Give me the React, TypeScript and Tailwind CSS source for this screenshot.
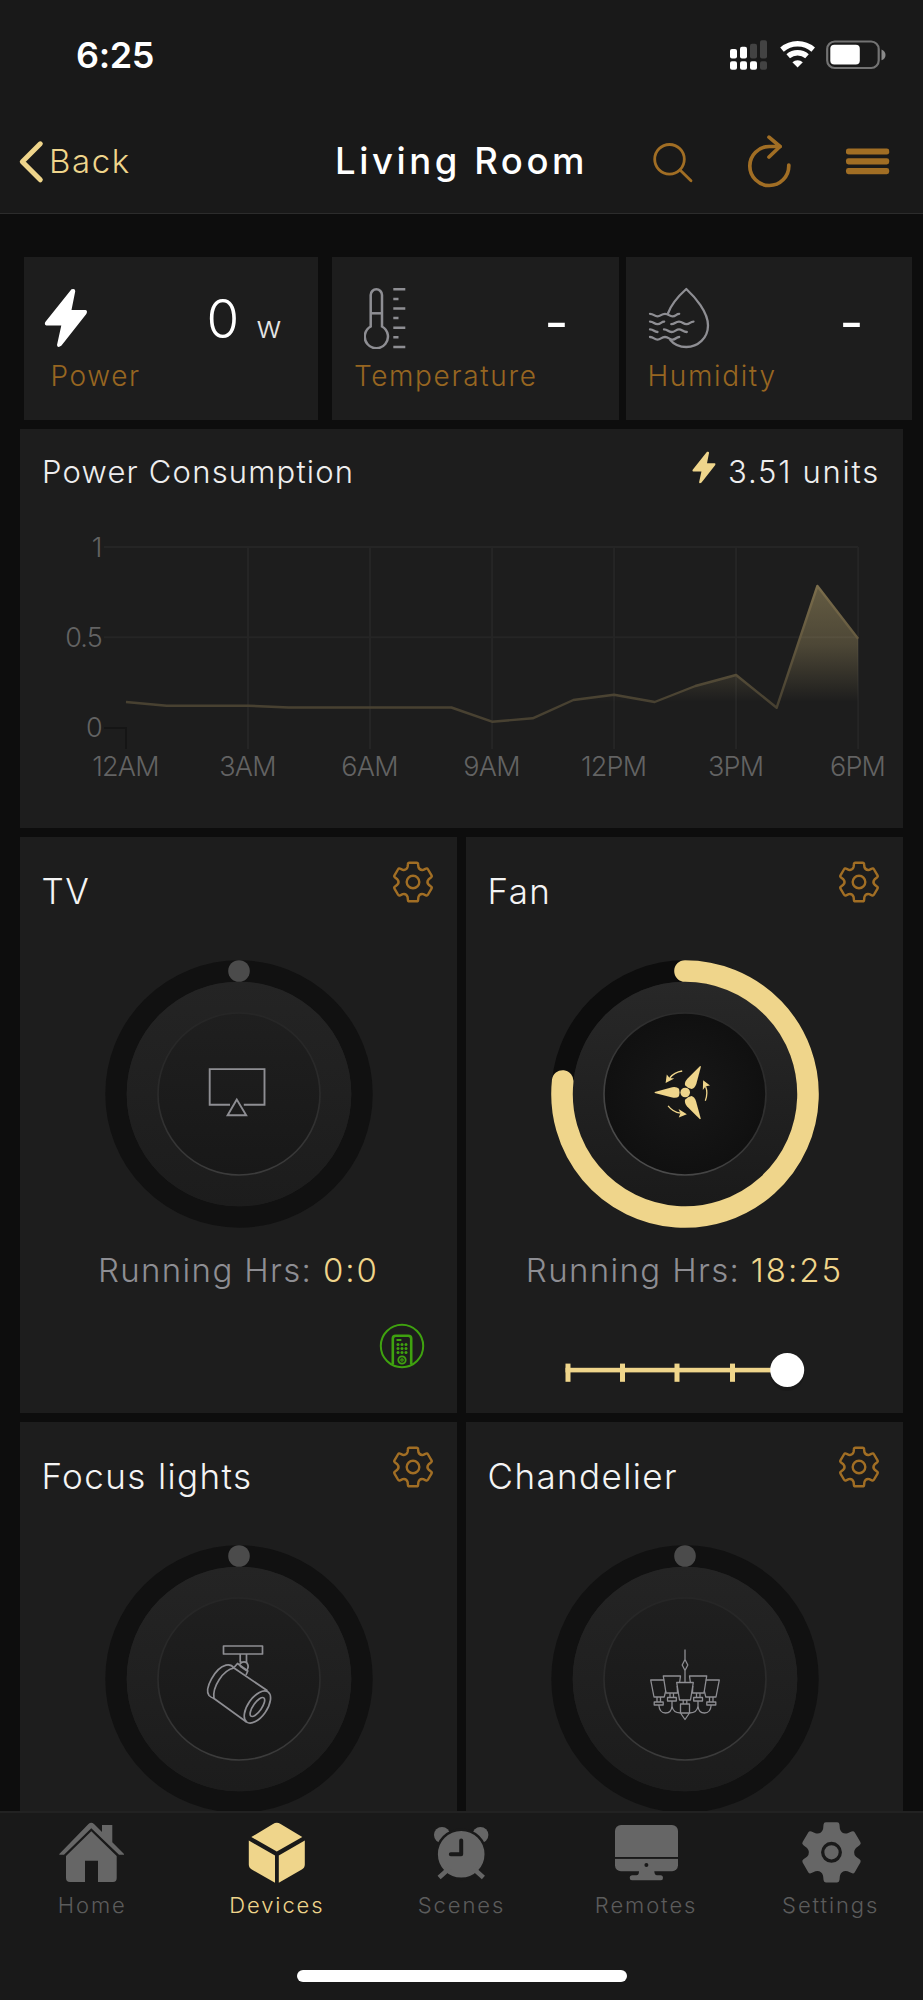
import type { ReactNode } from 'react';
import { clsx } from 'clsx';

const GOLD = '#efd58b';
const BRONZE = '#a16e24';
const GREY = '#8e8e93';

// Six-tooth gear outline centred on 0,0 with an outer radius of 19.5
const gearPath = (() => {
  const rotate = (x: number, y: number, deg: number) => {
    const a = (deg * Math.PI) / 180;
    return `${(x * Math.cos(a) - y * Math.sin(a)).toFixed(2)} ${(x * Math.sin(a) + y * Math.cos(a)).toFixed(2)}`;
  };
  let d = '';
  for (let i = 0; i < 6; i++) {
    const p = (x: number, y: number) => rotate(x, y, i * 60);
    d += `${i === 0 ? 'M' : 'L'}${p(-5.4, -15)} L${p(-5.1, -17.8)} Q${p(-5, -19.3)} ${p(-3.6, -19.3)}`;
    d += `L${p(3.6, -19.3)} Q${p(5, -19.3)} ${p(5.1, -17.8)} L${p(5.4, -15)} Q${p(6.6, -11.4)} ${rotate(-5.4, -15, i * 60 + 60)}`;
  }
  return d + 'Z';
})();

function StatusBar() {
  return (
    <div className="flex h-[110px] items-center justify-between pl-[76px] pr-[36px]">
      <span className="text-[36px] font-semibold leading-none tracking-[-0.4px] text-white">6:25</span>
      <div className="flex items-center">
        <svg width="38" height="30" viewBox="0 0 38 30" fill="#fff">
          <rect x="0" y="9" width="7" height="9.5" rx="2" />
          <rect x="10" y="6.7" width="7" height="11.8" rx="2" />
          <rect x="20" y="3.7" width="7" height="14.8" rx="2" fill="#434343" />
          <rect x="30" y="0.3" width="7" height="18.2" rx="2" fill="#434343" />
          <rect x="0" y="21.3" width="7" height="8.5" rx="2" />
          <rect x="10" y="21.3" width="7" height="8.5" rx="2" />
          <rect x="20" y="21.3" width="7" height="8.5" rx="2" />
          <rect x="30" y="21.3" width="7" height="8.5" rx="2" fill="#434343" />
        </svg>
        <svg width="36" height="30" viewBox="0 0 36 30" className="ml-[12px] mr-[10px]" fill="none" stroke="#fff">
          <path d="M2 9.6 A23.7 23.7 0 0 1 33.2 9.6" strokeWidth="5.4" />
          <path d="M8.2 16.2 A14.4 14.4 0 0 1 27 16.2" strokeWidth="5.4" />
          <path d="M17.6 27.5 L12.4 22.2 A8 8 0 0 1 22.8 22.2 Z" fill="#fff" stroke="none" />
        </svg>
        <svg width="61" height="30" viewBox="0 0 61 30">
          <rect x="1.2" y="1.5" width="51.5" height="26.5" rx="7.5" fill="none" stroke="#737373" strokeWidth="2.2" />
          <rect x="4.3" y="4.7" width="29.5" height="19.8" rx="4" fill="#fff" />
          <path d="M55.5 9.5 Q59.5 11 59.5 15 Q59.5 19 55.5 20.3 Z" fill="#8a8a8a" />
        </svg>
      </div>
    </div>
  );
}

function NavBar() {
  return (
    <div className="grid h-[103px] grid-cols-[336px_1fr_auto] items-center pr-[32px]">
      <button className="flex items-center gap-[5px] pl-[18px] text-[33px] font-light leading-none tracking-[1.6px] text-[#efd58b]">
        <svg width="26" height="44" viewBox="0 0 26 44" fill="none" stroke={GOLD} strokeWidth="5" strokeLinecap="round" strokeLinejoin="round">
          <path d="M22.3 3.8 L4.3 21.8 L22.3 39.8" />
        </svg>
        Back
      </button>
      <h1 className="-ml-[1px] whitespace-nowrap text-[36.5px] font-medium leading-none tracking-[3.55px] text-white">Living Room</h1>
      <div className="flex items-center gap-[52px]" style={{ color: BRONZE }}>
        <svg width="42" height="52" viewBox="0 0 42 52" fill="none" stroke="currentColor" strokeWidth="2.8" strokeLinecap="round">
          <circle cx="16.5" cy="23.3" r="14.8" />
          <path d="M27.3 34.3 L38 44.7" />
        </svg>
        <svg width="46" height="54" viewBox="0 0 46 54" fill="none" stroke="currentColor" strokeWidth="3.7" strokeLinecap="round" strokeLinejoin="round">
          <path d="M41.8 30 V31 A19.5 19.5 0 1 1 22.3 11.5 H33" />
          <path d="M22 2.1 L33 11.5 L22 22" />
        </svg>
        <svg width="46" height="30" viewBox="0 0 46 30" fill="currentColor">
          <rect x="1" y="1.4" width="43.2" height="6.2" rx="2.4" />
          <rect x="1" y="11.2" width="43.2" height="6.2" rx="2.4" />
          <rect x="1" y="21" width="43.2" height="6.2" rx="2.4" />
        </svg>
      </div>
    </div>
  );
}

function Bolt({ className, color }: { className: string; color: string }) {
  return (
    <svg className={className} viewBox="0 0 44 60" fill={color}>
      <path d="M27.5 1.3 Q31.5 0 31.2 3.5 L27.5 22 H41.5 Q44 22.5 42.3 26 L17.5 57.5 Q13.5 60.5 13 57 L17.3 37.5 H2.5 Q0 37 1.3 34 Z" />
    </svg>
  );
}

function ThermometerIcon() {
  return (
    <svg width="44" height="62" viewBox="0 0 44 62" fill="none" stroke={GREY} strokeWidth="2.5">
      <path d="M6.7 39.5 V8 A5.65 5.65 0 0 1 18 8 V39.5 A11.6 11.6 0 1 1 6.7 39.5 Z" />
      <path d="M6.7 26.3 H18" />
      <path d="M29.3 2.3 H41.3 M29.3 12 H34.5 M29.3 21.5 H41.3 M29.3 31 H34.5 M29.3 40.7 H41.3 M29.3 50.3 H34.5 M29.3 60 H41.3" />
    </svg>
  );
}

function HumidityIcon() {
  return (
    <svg width="62" height="62" viewBox="0 0 62 62" fill="none" stroke={GREY} strokeWidth="2.3" strokeLinecap="round" strokeLinejoin="round">
      <path d="M19.7 27 C23 17.5 31 8.5 38.3 2 C47 10 60 25 60 38.5 C60 51 50 60 38.3 60 C31.5 60 26 57.5 22.3 53" />
      <path d="M2 26.8 C6 26.8 6 29.4 9.5 29.4 S13 26.8 17 26.8 S21 29.4 24.5 29.4 S28 26.8 31.2 26.8" />
      <path d="M2 34.6 C6 34.6 6 37.2 9.5 37.2 S13 34.6 16.2 34.6 M23.3 37.2 C27 37.2 27 34.6 31 34.6 S35 37.2 38.5 37.2 S42 34.6 45.5 34.6" />
      <path d="M2 42.4 C6 42.4 6 45 9.5 45 M16 42.4 C20 42.4 20 45 23.5 45 S28 42.4 31 42.4 S35 45 38.8 45" />
      <path d="M2 50 C6 50 6 52.6 9.5 52.6 S13 50 17 50 S21 52.6 24.5 52.6 S28 50 31.2 50" />
    </svg>
  );
}

function MetricCard({ className, labelClass, icon, label, children }: { className: string; labelClass: string; icon: ReactNode; label: string; children: ReactNode }) {
  return (
    <section className={clsx('h-[163px] shrink-0 bg-[#1d1d1d] pt-[30px]', className)}>
      <div className="flex h-[62px] items-center justify-between">
        {icon}
        <div className="-mb-[9px] flex items-baseline font-light leading-[64px] text-white">{children}</div>
      </div>
      <p className={clsx('mt-[9px] text-[28px] font-light leading-9 tracking-[1.65px] text-[#976621]', labelClass)}>{label}</p>
    </section>
  );
}

const usage = [702, 705.7, 705.7, 705.7, 707.5, 707.5, 707.5, 707.5, 707.5, 721.7, 718.3, 700, 694.7, 702, 686, 675, 707.7, 586, 638.7];
const hours = ['12AM', '3AM', '6AM', '9AM', '12PM', '3PM', '6PM'];
const hourX = (h: number) => 126 + h * 40.67;

function ConsumptionChart() {
  const line = usage.map((y, i) => `${i ? 'L' : 'M'}${hourX(i).toFixed(1)} ${y}`).join(' ');
  return (
    <svg width="882" height="290" viewBox="20 514 882 290" className="font-light text-[27px] tracking-[-0.8px]">
      <defs>
        <linearGradient id="area" gradientUnits="userSpaceOnUse" x1="0" y1="586" x2="0" y2="702">
          <stop offset="0" stopColor={GOLD} stopOpacity="0.34" />
          <stop offset="0.5" stopColor={GOLD} stopOpacity="0.23" />
          <stop offset="1" stopColor={GOLD} stopOpacity="0" />
        </linearGradient>
        <linearGradient id="line" gradientUnits="userSpaceOnUse" x1="0" y1="586" x2="0" y2="702">
          <stop offset="0" stopColor="#7b6d4b" />
          <stop offset="1" stopColor="#484131" />
        </linearGradient>
      </defs>
      <g stroke="#252525" strokeWidth="2">
        <path d="M104 547 H858 M104 637.3 H858" />
        {hours.slice(1).map((h, i) => (
          <path key={h} d={`M${hourX(i * 3 + 3)} 547 V749`} />
        ))}
        <path d="M104 728 H126 V749" stroke="#151515" fill="none" />
      </g>
      <path d={`${line} V728 H126 Z`} fill="url(#area)" />
      <path d={line} fill="none" stroke="url(#line)" strokeWidth="2.4" strokeLinejoin="round" />
      <g fill="#636363" textAnchor="end">
        <text x="101.5" y="556.5">1</text>
        <text x="102" y="646.5">0.5</text>
        <text x="102" y="737">0</text>
      </g>
      <g fill="#636363" textAnchor="middle">
        {hours.map((h, i) => (
          <text key={h} x={hourX(i * 3) - 0.5} y="776">{h}</text>
        ))}
      </g>
    </svg>
  );
}

function TvIcon() {
  return (
    <g fill="none" stroke={GREY} strokeWidth="1.9">
      <path d="M-9 10.7 H-29.3 V-24.9 H25.5 V10.7 H4.8" />
      <path d="M-2.2 5.6 L-11.4 21.3 H7.2 Z" />
    </g>
  );
}

function FanIcon() {
  return (
    <g transform="translate(0.2 -1.5)" fill={GOLD}>
      <circle r="4.8" />
      {[0, 120, 240].map((a) => (
        <g key={a} transform={`rotate(${a})`}>
          <path d="M-30.5 -0.6 L-13 -5.3 Q-8.5 -6 -6.2 -3.8 L-5.6 0 L-6.2 3.8 Q-8.5 6 -13 5 L-30.5 0.4 Z" />
          <path d="M-3 -21.5 Q-11 -20.3 -15.5 -14.5" fill="none" stroke={GOLD} strokeWidth="1.3" />
          <path d="M-19.6 -9.4 L-18.4 -18 L-15.6 -14.6 L-11 -14 Z" />
        </g>
      ))}
    </g>
  );
}

function SpotlightIcon() {
  return (
    <g fill="none" stroke={GREY} strokeWidth="1.7" strokeLinejoin="round">
      <rect x="-15.5" y="-33" width="39" height="8" />
      <path d="M1.2 -25 V-16.5 M7.5 -25 V-16.5 M1.2 -17 H7.5 M0.5 -14.5 Q4 -19 8 -16 Q10.5 -12 7.5 -8.5 L1 -13" />
      <path d="M-5 -11.5 L-1.5 -15.5 L8.8 -8 L7 -4" />
      <path d="M-5 -11 L28.5 11.8 M-25 19.5 L7.5 43" />
      <path d="M-5 -11 Q-8 -15 -13 -13.8 C-24 -11 -35 10 -30 16.5 Q-28 18.5 -25 19.5 C-27 8 -16 -9 -5 -11" />
      <ellipse cx="18.4" cy="28" rx="18.5" ry="9.5" transform="rotate(-55 18.4 28)" />
      <ellipse cx="18.4" cy="28" rx="11.2" ry="4.2" transform="rotate(-55 18.4 28)" />
    </g>
  );
}

function ChandelierIcon() {
  return (
    <g fill="none" stroke={GREY} strokeWidth="1.3" strokeLinejoin="round">
      <path d="M0 -29.5 V-19.5 L2.8 -14 L0 -8.5 L-2.8 -14 L0 -19.5 M0 -8.5 V3.5" />
      <path d="M-8.3 3.5 H8.3 L5.5 21 H-5.5 Z M-1.8 21 V25 M1.8 21 V25 M-4.5 25 H4.5 V34 H-4.5 Z M-4.5 34 L0 40.5 L4.5 34" />
      {[1, -1].map((s) => (
        <g key={s} transform={`scale(${s} 1)`}>
          <path d="M-7.8 7 L-7.5 14 H-19 L-21.7 -3 H-4.5 L-5.4 3.5 M-15 14 V18.5 M-11.5 14 V18.5 M-17.5 18.5 H-8.7 V22 H-17.5 Z" />
          <path d="M-20.8 1 H-34.3 L-31 18 H-20.8 L-19.3 12 M-28 18 V23 M-24.5 18 V23 M-30.8 23 H-21.8 V26 H-30.8 Z" />
          <path d="M-26.2 26 Q-25.5 34 -19.5 34 Q-13.5 34 -13 27 V22 M-13 27 Q-12 34 -4.5 34" />
        </g>
      ))}
    </g>
  );
}

interface DialProps {
  id: string;
  active?: boolean;
  children: ReactNode;
}

function Dial({ id, active, children }: DialProps) {
  return (
    <svg width="268" height="268" viewBox="-134 -134 268 268" className="mx-auto block">
      <defs>
        <linearGradient id={`${id}-disc`} x1="0" y1="0" x2="0" y2="1">
          <stop offset="0" stopColor={active ? '#282828' : '#242424'} />
          <stop offset="1" stopColor={active ? '#1a1a1a' : '#1c1c1c'} />
        </linearGradient>
        <linearGradient id={`${id}-button`} x1="0" y1="0" x2="0" y2="1">
          <stop offset="0" stopColor="#1f1f1f" />
          <stop offset="1" stopColor="#181818" />
        </linearGradient>
        <radialGradient id={`${id}-glow`}>
          <stop offset="0" stopColor="#181818" />
          <stop offset="1" stopColor="#101010" />
        </radialGradient>
        <linearGradient id={`${id}-rim`} x1={active ? '0.9' : '0.5'} y1="0" x2={active ? '0.2' : '0.5'} y2="1">
          <stop offset="0" stopColor="#262626" />
          <stop offset="0.5" stopColor={active ? '#333333' : '#2b2b2b'} />
          <stop offset="1" stopColor={active ? '#505050' : '#3c3c3c'} />
        </linearGradient>
      </defs>
      <circle r="123" fill="none" stroke={active ? '#0d0d0d' : '#111111'} strokeWidth="21.4" />
      <circle r="112.3" fill={`url(#${id}-disc)`} />
      <circle r="81" fill={active ? `url(#${id}-glow)` : `url(#${id}-button)`} stroke={`url(#${id}-rim)`} strokeWidth="1.6" />
      {active ? (
        <path d="M0 -123 A123 123 0 1 1 -122.3 -13" fill="none" stroke={GOLD} strokeWidth="21.6" strokeLinecap="round" />
      ) : (
        <circle cy="-123" r="10.8" fill="#4b4b4b" />
      )}
      {children}
    </svg>
  );
}

function RemoteBadge() {
  return (
    <svg width="48" height="48" viewBox="-24 -24 48 48" className="ml-auto mr-[31px] mt-[32px] block" fill="none" stroke="#3fa20f" strokeWidth="2">
      <circle r="21.2" />
      <path d="M-9.2 18.5 V-7.5 Q-9.2 -10.3 -6.2 -10.3 H6.2 Q9.2 -10.3 9.2 -7.5 V18.5" strokeWidth="2.6" />
      <path d="M-5.5 -6 H-0.6" />
      <g fill="#3fa20f" stroke="none">
        {[-1.6, 2.5, 6.5].map((y) => [-4, 0, 4].map((x) => <circle key={`${x},${y}`} cx={x} cy={y} r="1.5" />))}
      </g>
      <circle cy="14" r="3.7" strokeWidth="1.8" />
      <circle cy="14" r="1.2" strokeWidth="1.2" />
    </svg>
  );
}

function SpeedSlider() {
  return (
    <svg width="250" height="60" viewBox="-5 0 250 60" className="mx-auto mt-[55px] block">
      <rect x="0.5" y="22.8" width="210" height="4.6" fill={GOLD} />
      {[0.5, 55, 109.5, 165].map((x) => (
        <rect key={x} x={x} y="18.6" width="5" height="18.2" fill={GOLD} />
      ))}
      <circle cx="222.2" cy="29" r="17" fill="#000" opacity="0.12" />
      <circle cx="222.2" cy="25" r="17" fill="#fff" />
    </svg>
  );
}

interface DeviceCardProps {
  name: string;
  hours?: string;
  icon: ReactNode;
  active?: boolean;
  footer?: ReactNode;
}

function DeviceCard({ name, hours, icon, active, footer }: DeviceCardProps) {
  return (
    <section className="h-[576px] bg-[#1d1d1d]">
      <div className="flex h-[123px] items-start justify-between pl-[21.5px] pr-[23px]">
        <h2 className="mt-[34px] text-[35px] font-light leading-10 tracking-[1.4px] text-[#f4f4f4]">{name}</h2>
        <svg width="42" height="42" viewBox="-21 -21 42 42" className="mt-[24px]" fill="none" stroke={BRONZE} strokeWidth="2.4" strokeLinejoin="round">
          <path d={gearPath} />
          <circle r="6.3" />
        </svg>
      </div>
      <Dial id={name.split(' ')[0]} active={active}>{icon}</Dial>
      {hours && (
        <p className="mt-[22px] text-center text-[33px] font-light leading-10 tracking-[1.35px] text-[#8e8e93]">
          Running Hrs: <span className="tracking-[2px] text-[#efd58b]">{hours}</span>
        </p>
      )}
      {footer}
    </section>
  );
}

const tabs = [
  {
    label: 'Home',
    icon: (
      <>
        <path d="M0.3 32 L29.5 2 Q32.3 -0.5 35 2 L43 10 V3 H53.3 V20.3 L65 32 V32.8 H60 L32.3 6.3 L5 32.8 H0.3 Z" />
        <path d="M32.3 9.3 L57.7 34 V56 Q57.7 60 54 60 H39 V38.7 H26 V60 H11 Q7 60 7 56 V34 Z" />
      </>
    ),
  },
  {
    label: 'Devices',
    icon: (
      <>
        <path d="M7.3 15 L29 2 Q32.8 -0.4 36.6 2 L58.3 15 L32.8 29.5 Z" />
        <path d="M4.8 18.5 L31 33.6 V60.7 L7.8 47.5 Q4.8 45.8 4.8 42.5 Z M60.8 18.5 L34.8 33.6 V60.7 L57.8 47.5 Q60.8 45.8 60.8 42.5 Z" />
      </>
    ),
  },
  {
    label: 'Scenes',
    icon: (
      <>
        <circle cx="14" cy="13" r="8" />
        <circle cx="52.4" cy="13" r="8" />
        <circle cx="33.2" cy="32.3" r="24.6" stroke="#191919" strokeWidth="2.6" />
        <path d="M20 47.5 L12.8 54 M46.5 47.5 L53.7 54" stroke="currentColor" strokeWidth="4.6" strokeLinecap="square" />
        <path d="M33.2 18.5 V32.3 H22.8" fill="none" stroke="#191919" strokeWidth="4" strokeLinecap="round" strokeLinejoin="round" />
      </>
    ),
  },
  {
    label: 'Remotes',
    icon: (
      <>
        <rect x="2" y="3" width="63" height="46.3" rx="6" />
        <path d="M26 49 H41.3 Q41.5 53.3 44 53.3 H48 Q50 53.3 50 55.8 T48 58.3 H19 Q16.7 58.3 16.7 55.8 T19 53.3 H23.5 Q26 53.3 26 49 Z" />
        <rect x="2" y="35" width="63" height="1.9" fill="#191919" />
        <circle cx="33.4" cy="43" r="2" fill="#191919" />
      </>
    ),
  },
  {
    label: 'Settings',
    icon: (
      <>
        <path d={gearPath} transform="translate(33.5 30.3) scale(1.56)" />
        <circle cx="33.5" cy="30.3" r="8.8" fill="none" stroke="#191919" strokeWidth="3.3" />
      </>
    ),
  },
];

function TabBar({ current }: { current: string }) {
  return (
    <nav className="flex h-[189px] flex-col items-center border-t-2 border-[#222222] bg-[#191919]">
      <div className="grid w-full grid-cols-5">
        {tabs.map((tab) => (
          <button
            key={tab.label}
            className={clsx('flex flex-col items-center pt-[9px]', tab.label === current ? 'text-[#efd58b]' : 'text-[#666666]')}
          >
            <svg width="66" height="61" viewBox="0 0 66 61" fill="currentColor">{tab.icon}</svg>
            <span className={clsx('mt-[6px] text-[22px] font-light leading-8 tracking-[1.9px]', tab.label !== current && 'text-[#5c5c5c]')}>
              {tab.label}
            </span>
          </button>
        ))}
      </div>
      <div className="mt-[49px] h-[12px] w-[330px] rounded-full bg-white" />
    </nav>
  );
}

export default function App() {
  return (
    <div className="flex h-[2000px] w-[923px] flex-col overflow-hidden bg-[#0d0d0d] font-['Inter',sans-serif]">
      <header className="h-[214px] shrink-0 border-b border-[#2c2c2c] bg-[#191919]">
        <StatusBar />
        <NavBar />
      </header>

      <main className="min-h-0 flex-1 overflow-hidden pt-[43px]">
        <div className="flex pl-[24.4px]">
          <MetricCard
            className="w-[294px] pl-[20px] pr-[37px]"
            labelClass="pl-[6px]"
            label="Power"
            icon={<Bolt className="h-[60px] w-[44px]" color="#fff" />}
          >
            <span className="text-[53px]">0</span>
            <span className="ml-[17px] text-[31px] text-[#e4e4e4]">w</span>
          </MetricCard>
          <MetricCard className="ml-[14px] w-[287px] pl-[31.5px] pr-[51px]" labelClass="-ml-[10px]" label="Temperature" icon={<ThermometerIcon />}>
            <span className="text-[52px] font-normal">-</span>
          </MetricCard>
          <MetricCard className="ml-[7px] w-[286px] pl-[22px] pr-[49px]" labelClass="-ml-[1px]" label="Humidity" icon={<HumidityIcon />}>
            <span className="text-[52px] font-normal">-</span>
          </MetricCard>
        </div>

        <section className="ml-[20px] mt-[9px] h-[399px] w-[883px] bg-[#1d1d1d] pt-[22px]">
          <div className="flex h-[42px] items-center justify-between pl-[22px] pr-[23px] text-[31px] font-light text-[#eeeeee]">
            <h2 className="tracking-[1.2px]">Power Consumption</h2>
            <p className="flex items-center gap-[12px] tracking-[1.75px]">
              <Bolt className="-mt-[9px] h-[33px] w-[24px]" color={GOLD} />
              3.51 units
            </p>
          </div>
          <div className="mt-[21px]">
            <ConsumptionChart />
          </div>
        </section>

        <div className="mx-[20px] mt-[9px] grid grid-cols-2 gap-[9px]">
          <DeviceCard name="TV" hours="0:0" icon={<TvIcon />} footer={<RemoteBadge />} />
          <DeviceCard name="Fan" hours="18:25" icon={<FanIcon />} active footer={<SpeedSlider />} />
          <DeviceCard name="Focus lights" icon={<SpotlightIcon />} />
          <DeviceCard name="Chandelier" icon={<ChandelierIcon />} />
        </div>
      </main>

      <TabBar current="Devices" />
    </div>
  );
}
